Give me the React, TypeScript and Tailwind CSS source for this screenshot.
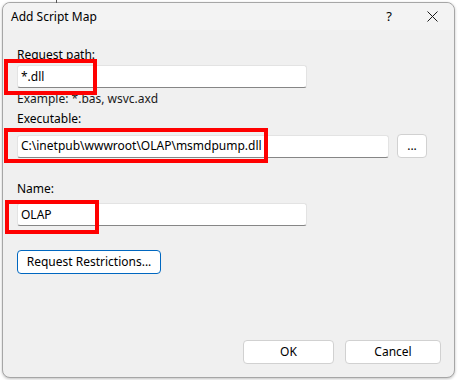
import React from 'react';

const font = { fontFamily: '"Segoe UI", "Noto Sans", sans-serif' };

const Field = ({ value, width }: { value: string; width: string }) => (
  <div
    className={`${width} h-[23px] bg-white border border-[#e3e3e3] border-b-[#868686] rounded-[3px] flex items-center px-[3px] text-[12px] text-black`}
  >
    {value}
  </div>
);

const Button = ({ label, width, primary = false }: { label: string; width: string; primary?: boolean }) => (
  <div
    className={`${width} h-[24px] bg-white rounded-[4px] flex items-center justify-center text-[12px] text-black ${
      primary ? 'border border-[#0067c0]' : 'border border-[#d1d1d1]'
    }`}
  >
    {label}
  </div>
);

// red highlight rectangles drawn over the form
const Highlight = ({ className }: { className: string }) => (
  <div className={`absolute border-[4px] border-[#ff0000] pointer-events-none ${className}`} />
);

export default function App() {
  return (
    <div className="w-[459px] h-[380px] bg-white relative overflow-hidden" style={font}>
      <div className="absolute left-[56px] top-0 w-[1px] h-[3px] bg-[#555]" />
      <div className="ml-[2px] mt-[2px] w-[453px] h-[376px] bg-[#f0f0f0] border border-[#a6a6a6] rounded-[8px] flex flex-col shadow-[0_1px_3px_rgba(0,0,0,0.25)]">
        {/* title bar */}
        <div className="h-[27px] bg-[#f3f3f3] rounded-t-[8px] flex items-center pl-[8px] text-[12px] text-black">
          <span className="flex-1">Add Script Map</span>
          <span className="w-[14px] text-center mr-[31px] text-[13px]">?</span>
          <svg width="11" height="11" viewBox="0 0 11 11" className="mr-[16px]">
            <path d="M0.5 0.5 L10.5 10.5 M10.5 0.5 L0.5 10.5" stroke="#1a1a1a" strokeWidth="1" />
          </svg>
        </div>

        {/* body */}
        <div className="flex-1 flex flex-col pl-[14px] pr-[13px] text-[12px] text-black">
          <div className="mt-[17px] leading-[16px]">Request path:</div>
          <div className="mt-[2px]">
            <Field value="*.dll" width="w-[290px]" />
          </div>
          <div className="mt-[3px] leading-[16px] text-[#1a1a1a]">Example: *.bas, wsvc.axd</div>
          <div className="mt-[4px] leading-[16px]">Executable:</div>
          <div className="mt-[7px] flex items-center gap-[8px]">
            <Field value="C:\inetpub\wwwroot\OLAP\msmdpump.dll" width="w-[372px]" />
            <Button label="..." width="w-[30px]" />
          </div>
          <div className="mt-[23px] leading-[16px]">Name:</div>
          <div className="mt-[6px]">
            <Field value="OLAP" width="w-[290px]" />
          </div>
          <div className="mt-[24px]">
            <Button label="Request Restrictions..." width="w-[144px]" primary />
          </div>
          <div className="flex-1" />
          <div className="flex justify-end gap-[11px] mb-[13px]">
            <Button label="OK" width="w-[91px]" />
            <Button label="Cancel" width="w-[96px]" />
          </div>
        </div>
      </div>

      <Highlight className="left-[4px] top-[59px] w-[93px] h-[36px]" />
      <Highlight className="left-[4px] top-[128px] w-[264px] h-[35px]" />
      <Highlight className="left-[5px] top-[200px] w-[94px] h-[34px]" />
    </div>
  );
}
